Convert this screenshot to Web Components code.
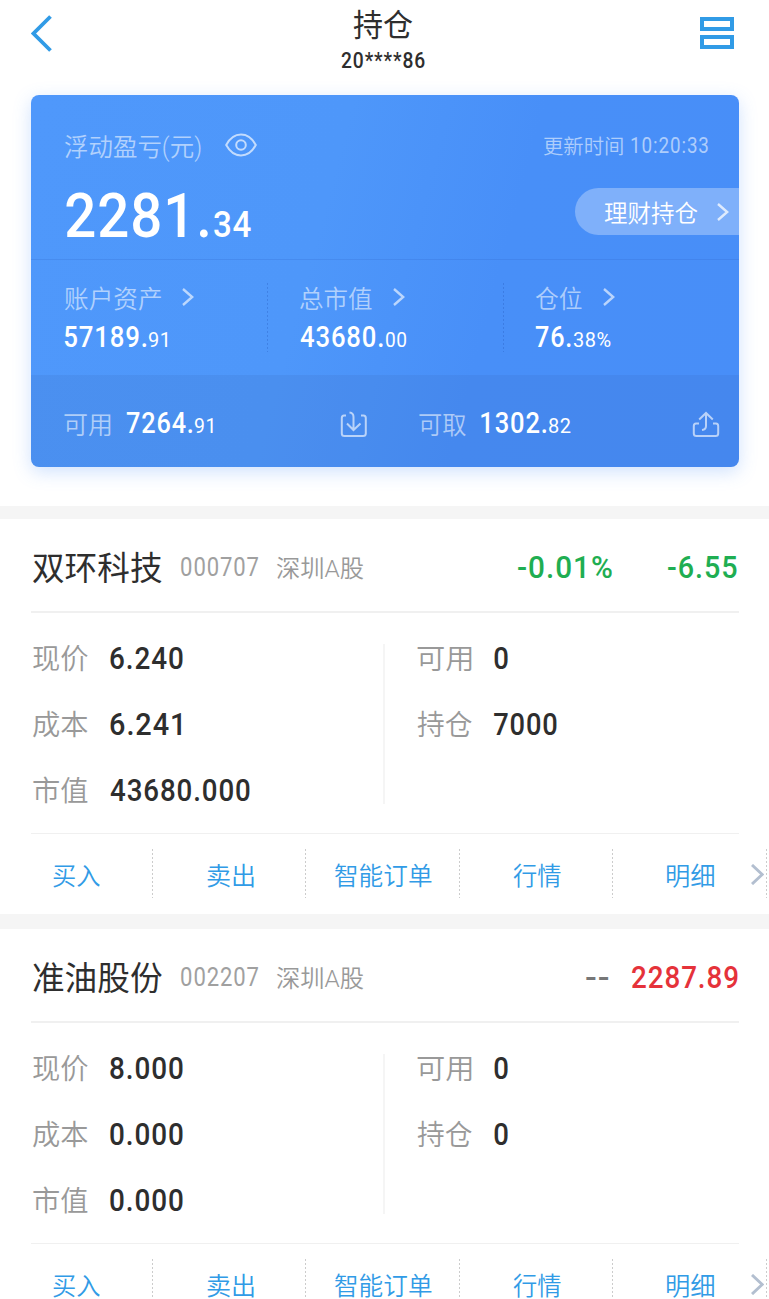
<!DOCTYPE html>
<html lang="zh-CN">
<head>
<meta charset="utf-8">
<meta name="viewport" content="width=device-width, initial-scale=1">
<title>持仓</title>
<style>
	html, body {
		margin: 0;
		padding: 0;
	}
	body {
		height: 1299px;
		overflow: hidden;
		background: #fff;
		color: #2e2e2e;
		font-family: Roboto, "Noto Sans CJK SC", sans-serif;
	}
</style>
</head>
<body>
<holdings-page></holdings-page>

<script>
const define = (name, html, setup) => {
	const template = document.createElement('template')
	customElements.define(name, class extends HTMLElement {
		constructor() {
			super()
			this.attachShadow({ mode: 'open' })
		}
		connectedCallback() {
			if (this.shadowRoot.firstChild) return
			template.innerHTML = typeof html === 'function' ? html(this.dataset) : html
			this.shadowRoot.appendChild(template.content.cloneNode(true))
			if (setup) setup(this)
		}
	})
}

const measure = document.createElement('canvas').getContext('2d')

/**
 * One line of text, set so that its ink is exactly data-w wide.
 * The box has the width of the ink, without the side bearings.
 */
define('fit-text', `
	<style>
		:host {
			display: block;
			flex: none;
			white-space: nowrap;
		}
		span {
			display: inline-block;
			transform-origin: 0 50%;
		}
	</style>
	<span><slot></slot></span>
`, el => {
	const { w, size, weight = 400, space = 0, dy = 0 } = el.dataset
	const text = el.textContent
	const span = el.shadowRoot.querySelector('span')
	measure.font = `${weight} ${size}px Roboto, "Noto Sans CJK SC", sans-serif`
	measure.letterSpacing = space + 'px'
	measure.textAlign = 'left'
	const m = measure.measureText(text)
	const left = -m.actualBoundingBoxLeft
	const scale = w / (m.actualBoundingBoxRight - left)
	el.style.cssText = `width:${w}px;height:${size}px;font-size:${size}px;line-height:${size}px;font-weight:${weight}`
	span.style.letterSpacing = space + 'px'
	span.style.transform = `translate(${-left * scale}px, ${dy}px) scaleX(${scale})`
})

const text = (value, w, size, weight = 400, space = 0, dy = 0) =>
	`<fit-text data-w="${w}" data-size="${size}" data-weight="${weight}" data-space="${space}" data-dy="${dy}">${value}</fit-text>`

define('ui-chevron', d => `
	<style>
		:host { display: block; flex: none; }
		svg { display: block; }
	</style>
	<svg width="${d.w}" height="${d.h}" viewBox="0 0 ${d.w} ${d.h}" fill="none" stroke="currentColor" stroke-width="${d.stroke}">
		<path d="${d.dir === 'left'
			? `M${d.w - 1.5} 1.5L2.5 ${d.h / 2}L${d.w - 1.5} ${d.h - 1.5}`
			: `M1 1L${d.w - 1.8} ${d.h / 2}L1 ${d.h - 1}`}"/>
	</svg>
`)

define('page-header', `
	<style>
		:host {
			display: flex;
			justify-content: space-between;
			height: 95px;
			padding: 0 35px 0 31px;
			box-sizing: border-box;
		}
		ui-chevron { color: #319be6; margin-top: 15px; width: 34px; }
		.title {
			display: flex;
			flex-direction: column;
			align-items: center;
			padding: 9px 0 0 1px;
			gap: 9.5px;
		}
		.menu { display: block; margin-top: 17px; }
	</style>
	<ui-chevron data-w="21" data-h="37" data-stroke="3.8" data-dir="left"></ui-chevron>
	<div class="title">
		${text('持仓', 60, 31, 400, 0, 0.5)}
		${text('20****86', 84, 21.5, 500, 1)}
	</div>
	<svg class="menu" width="34" height="32" fill="none" stroke="#319be6" stroke-width="4">
		<rect x="2" y="2" width="30" height="10"/>
		<rect x="2" y="20" width="30" height="10"/>
	</svg>
`)

// Amount with a large integer part and small decimals
define('money-text', d => `
	<style>
		:host {
			display: flex;
			align-items: baseline;
			color: #fff;
			gap: ${d.gap || 3}px;
		}
	</style>
	${text(d.int, d.iw, d.is || 29.5, 500, 1)}
	${text(d.dec, d.dw, d.ds || 20.5, d.weight || 400, .5)}
`)

define('asset-stat', d => `
	<style>
		:host {
			display: flex;
			flex-direction: column;
			gap: 10px;
			height: 69px;
			box-sizing: border-box;
			color: rgba(255, 255, 255, .56);
		}
		div, money-text { height: 30px; }
		div { display: flex; align-items: center; gap: 21px; }
		ui-chevron { color: rgba(255, 255, 255, .62); margin-top: -2px; }
		money-text { line-height: 30px; }
	</style>
	<div>
		${text(d.label, d.lw, 24.5, 350, 0, 1.5)}
		<ui-chevron data-w="12" data-h="18" data-stroke="2.4"></ui-chevron>
	</div>
	<money-text data-int="${d.int}" data-iw="${d.iw}" data-dec="${d.dec}" data-dw="${d.dw}"></money-text>
`)

define('asset-card', `
	<style>
		:host {
			display: block;
			height: 371.5px;
			margin: 0 30.5px 0 31px;
			border-radius: 8px;
			overflow: hidden;
			background: linear-gradient(105deg, #4f98fb 0%, #4e97fa 40%, #488ff8 64%, #488ef8 100%);
			box-shadow: 0 5px 18px rgba(72, 142, 248, .26);
			color: rgba(255, 255, 255, .56);
		}
		.top {
			height: 165px;
			padding-top: 36px;
			box-sizing: border-box;
			border-bottom: 1px solid rgba(40, 90, 190, .18);
		}
		.row { display: flex; align-items: center; }
		.profit { height: 30px; padding: 0 30.5px 0 33px; }
		.profit svg { margin: -3px auto 0 24px; }
		.time { display: flex; align-items: center; gap: 8px; }
		.total {
			height: 47px;
			margin-top: 27px;
			padding-left: 34.5px;
			justify-content: space-between;
		}
		.total money-text { margin-top: 8px; }
		.pill {
			display: flex;
			align-items: center;
			gap: 19px;
			width: 164px;
			height: 47px;
			padding-left: 29.5px;
			box-sizing: border-box;
			border-radius: 24px 0 0 24px;
			background: rgba(255, 255, 255, .3);
			color: #fff;
		}
		.pill ui-chevron { opacity: .75; }
		.stats {
			display: grid;
			grid-template-columns: 237px 236px 1fr;
			height: 115px;
			padding-top: 23px;
			box-sizing: border-box;
		}
		asset-stat { padding-left: 33px; }
		asset-stat:nth-child(2) { padding-left: 32px; }
		asset-stat:nth-child(3) { padding-left: 30.5px; }
		asset-stat:not(:last-child) {
			background: repeating-linear-gradient(rgba(30, 80, 180, .3) 0 2px, transparent 2px 4px) right / 1px 100% no-repeat;
		}
		.cash {
			height: 92px;
			padding: 6px 18.5px 0 33px;
			box-sizing: border-box;
			background: rgba(55, 95, 170, .13);
		}
		.cash money-text { margin-left: 15px; }
		.cash .in { margin: 0 50.5px 0 auto; }
		.cash .out { margin-left: 122px; }
	</style>
	<div class="top">
		<div class="row profit">
			${text('浮动盈亏(元)', 137, 25, 350, 0, 1)}
			<svg width="32" height="24" fill="none" stroke="rgba(255,255,255,.66)" stroke-width="2">
				<path d="M1.200 12C5 5 10.500 1.600 16 1.600S27 5 30.800 12C27 19 21.500 22.400 16 22.400S5 19 1.200 12Z"/>
				<circle cx="16" cy="12" r="4.800"/>
			</svg>
			<div class="time">
				${text('更新时间', 80, 20.5, 350, 0, 1)}
				${text('10:20:33', 77, 21.5, 400, 1)}
			</div>
		</div>
		<div class="row total">
			<money-text data-int="2281." data-iw="142" data-is="62" data-dec="34" data-dw="37" data-ds="37.5" data-gap="6" data-weight="500"></money-text>
			<div class="pill">
				${text('理财持仓', 94, 24, 350, 0, 1.5)}
				<ui-chevron data-w="12" data-h="18" data-stroke="2.4"></ui-chevron>
			</div>
		</div>
	</div>
	<div class="stats">
		<asset-stat data-label="账户资产" data-lw="97" data-int="57189." data-iw="82" data-dec="91" data-dw="18.5"></asset-stat>
		<asset-stat data-label="总市值" data-lw="72" data-int="43680." data-iw="82.5" data-dec="00" data-dw="20.5"></asset-stat>
		<asset-stat data-label="仓位" data-lw="47" data-int="76." data-iw="35.5" data-dec="38%" data-dw="38"></asset-stat>
	</div>
	<div class="row cash">
		${text('可用', 46.5, 24.5, 350, 0, 1.5)}
		<money-text data-int="7264." data-iw="66" data-dec="91" data-dw="18"></money-text>
		<svg class="in" width="28" height="27" fill="none" stroke="rgba(255,255,255,.62)" stroke-width="2">
			<path d="M6 4.500H4Q1.800 4.500 1.800 7V22.500Q1.800 25 4.500 25H23Q25.800 25 25.800 22.500V7Q25.800 4.500 23.500 4.500H21"/>
			<path d="M9.500 1.500Q13.500 2 13.500 6V19M7 12.500L13.500 19L20.500 12.500"/>
		</svg>
		${text('可取', 47, 24.5, 350, 0, 1.5)}
		<money-text data-int="1302." data-iw="65" data-dec="82" data-dw="21.5"></money-text>
		<svg class="out" width="28" height="27" fill="none" stroke="rgba(255,255,255,.62)" stroke-width="2">
			<path d="M7 12.500H4Q1.800 12.500 1.800 15V22.500Q1.800 25 4.500 25H23.500Q26.200 25 26.200 22.500V15Q26.200 12.500 24 12.500H21"/>
			<path d="M10 19Q14 18.500 14 15V2M7.200 8.500L14 2L20.800 8.500"/>
		</svg>
	</div>
`)

define('stock-field', d => `
	<style>
		:host {
			display: flex;
			align-items: center;
			gap: 22px;
			height: 66px;
			color: #999;
		}
		.value { color: #2e2e2e; }
	</style>
	${text(d.label, 55, 28.5, 350, 0, 1.5)}
	<div class="value">${text(d.value, d.w, 31.5, 500, 1, 1)}</div>
`)

define('action-bar', `
	<style>
		:host {
			display: grid;
			grid-template-columns: repeat(5, 153.5px);
			position: relative;
			height: 80px;
			padding: 15px 0 16px;
			margin-left: -1px;
			box-sizing: border-box;
			color: #319be6;
		}
		div {
			display: flex;
			align-items: center;
			justify-content: center;
			padding: 3px 0 0 1px;
			background: repeating-linear-gradient(#ccc 0 2px, #fff 2px 4px) right / 1px 100% no-repeat;
		}
		ui-chevron {
			position: absolute;
			left: 752px;
			top: 30px;
			color: #b3bfd0;
		}
	</style>
	<div>${text('买入', 47, 24.5, 350, 0, 1.5)}</div>
	<div>${text('卖出', 46.5, 24.5, 350, 0, 1.5)}</div>
	<div>${text('智能订单', 97, 24.5, 350, 0, 1.5)}</div>
	<div>${text('行情', 48, 24.5, 350, 0, 1.5)}</div>
	<div>${text('明细', 47, 24.5, 350, 0, 1.5)}</div>
	<ui-chevron data-w="13" data-h="21" data-stroke="3"></ui-chevron>
`)

define('stock-card', `
	<style>
		:host {
			display: block;
			height: 395px;
			background: #fff;
		}
		header {
			display: flex;
			align-items: center;
			height: 94px;
			margin: 0 30px 0 31px;
			padding: 5px 2px 0 2px;
			box-sizing: border-box;
			border-bottom: 2px solid #f0f0f0;
		}
		.body {
			display: grid;
			grid-template-columns: 352px 1fr;
			height: 221px;
			margin: 0 30px 0 31px;
			padding-top: 12px;
			box-sizing: border-box;
			border-bottom: 1px solid #f0f0f0;
		}
		.left { padding-left: 2px; }
		.right {
			height: 160px;
			margin-top: 19px;
			padding-left: 32px;
			border-left: 2px solid #f5f5f5;
		}
		.right > div { margin-top: -19px; }
	</style>
	<header><slot name="head"></slot></header>
	<div class="body">
		<div class="left"><slot></slot></div>
		<div class="right"><div><slot name="right"></slot></div></div>
	</div>
	<action-bar></action-bar>
`)

define('stock-head', d => `
	<style>
		:host {
			display: flex;
			align-items: center;
			width: 100%;
			color: #999;
		}
		.name { color: #2e2e2e; margin-right: 19px; }
		.code { color: #a0a0a0; margin-right: 18px; }
		.rate { margin-left: auto; color: ${d.rateColor}; }
		.gain { margin-left: ${d.gap}px; color: ${d.color}; }
	</style>
	<div class="name">${text(d.name, 129, 32.5, 400, 0, 1.5)}</div>
	<div class="code">${text(d.code, 77, 25, 400, 1)}</div>
	${text('深圳A股', 88, 24, 350, 0, 0.5)}
	<div class="rate">${text(d.rate, d.rw, 31, 500, 1)}</div>
	<div class="gain">${text(d.gain, d.gw, 31, 500, 1)}</div>
`)

define('holdings-page', `
	<style>
		:host {
			display: block;
			height: 1299px;
			overflow: hidden;
		}
		.band { height: 15px; background: #f5f5f5; }
		.first { height: 13px; margin-top: 39.5px; }
	</style>
	<page-header></page-header>
	<asset-card></asset-card>
	<div class="band first"></div>
	<stock-card>
		<stock-head slot="head" data-name="双环科技" data-code="000707" data-rate="-0.01%" data-rw="94" data-rate-color="#1fae52"
			data-gain="-6.55" data-gw="69" data-color="#1fae52" data-gap="56"></stock-head>
		<stock-field data-label="现价" data-value="6.240" data-w="73"></stock-field>
		<stock-field data-label="成本" data-value="6.241" data-w="71"></stock-field>
		<stock-field data-label="市值" data-value="43680.000" data-w="140"></stock-field>
		<stock-field slot="right" data-label="可用" data-value="0" data-w="14"></stock-field>
		<stock-field slot="right" data-label="持仓" data-value="7000" data-w="63"></stock-field>
	</stock-card>
	<div class="band"></div>
	<stock-card>
		<stock-head slot="head" data-name="准油股份" data-code="002207" data-rate="--" data-rw="23" data-rate-color="#777"
			data-gain="2287.89" data-gw="105.5" data-color="#e5323a" data-gap="22.5"></stock-head>
		<stock-field data-label="现价" data-value="8.000" data-w="73"></stock-field>
		<stock-field data-label="成本" data-value="0.000" data-w="73"></stock-field>
		<stock-field data-label="市值" data-value="0.000" data-w="73"></stock-field>
		<stock-field slot="right" data-label="可用" data-value="0" data-w="14"></stock-field>
		<stock-field slot="right" data-label="持仓" data-value="0" data-w="14"></stock-field>
	</stock-card>
`)
</script>
</body>
</html>
